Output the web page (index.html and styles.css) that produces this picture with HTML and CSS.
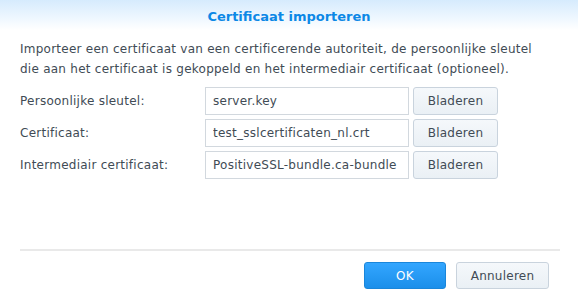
FILE: index.html
```html
<!DOCTYPE html>
<html lang="nl">

<head>
    <meta charset="UTF-8">
    <title>Certificaat importeren</title>
    <link rel="stylesheet" href="styles.css">
</head>

<body>
    <div class="dialog">
        <div class="dialog-header">Certificaat importeren</div>

        <div class="dialog-body">
            <p class="intro">Importeer een certificaat van een certificerende autoriteit, de persoonlijke sleutel die aan het certificaat is gekoppeld en het intermediair certificaat (optioneel).</p>

            <div class="form-row">
                <label class="field-label">Persoonlijke sleutel:</label>
                <input type="text" class="file-input" value="server.key" readonly>
                <button class="browse-button">Bladeren</button>
            </div>
            <div class="form-row">
                <label class="field-label">Certificaat:</label>
                <input type="text" class="file-input" value="test_sslcertificaten_nl.crt" readonly>
                <button class="browse-button">Bladeren</button>
            </div>
            <div class="form-row">
                <label class="field-label">Intermediair certificaat:</label>
                <input type="text" class="file-input" value="PositiveSSL-bundle.ca-bundle" readonly>
                <button class="browse-button">Bladeren</button>
            </div>
        </div>

        <div class="dialog-footer">
            <button class="ok-button">OK</button>
            <button class="cancel-button">Annuleren</button>
        </div>
    </div>
</body>

</html>
```

FILE: styles.css
```css
body {
    margin: 0;
    background-color: #ffffff;
    font-family: 'DejaVu Sans', Verdana, sans-serif;
    font-size: 12px;
    letter-spacing: 0.25px;
    color: #414b55;
}

.dialog {
    width: 578px;
    height: 295px;
    display: flex;
    flex-direction: column;
}

.dialog-header {
    height: 34px;
    line-height: 34px;
    text-align: center;
    font-weight: bold;
    font-size: 13px;
    letter-spacing: 0;
    color: #0c88e6;
    background: linear-gradient(to bottom, #d6ebfd 0px, #eef7ff 18px, #ffffff 30px);
}

.dialog-body {
    flex: 1;
    padding: 5px 28px 0 20px;
}

.intro {
    margin: 0 0 8px 0;
    line-height: 20px;
}

.form-row {
    display: flex;
    align-items: center;
    height: 28px;
    margin-bottom: 4px;
}

.field-label {
    width: 185px;
}

.file-input {
    width: 204px;
    height: 28px;
    box-sizing: border-box;
    border: 1px solid #d2d8de;
    padding: 0 7px;
    font-family: inherit;
    font-size: 12px;
    letter-spacing: inherit;
    color: #414b55;
    outline: none;
}

.browse-button {
    margin-left: 4px;
    width: 85px;
    height: 28px;
    border: 1px solid #c9d3dd;
    border-radius: 3px;
    background: linear-gradient(to bottom, #f5f8fb, #eaf0f5);
    font-family: inherit;
    font-size: 12px;
    letter-spacing: inherit;
    color: #414b55;
}

.dialog-footer {
    margin: 0 18px 0 20px;
    border-top: 2px solid #e9e9e9;
    height: 46px;
    box-sizing: border-box;
    display: flex;
    justify-content: flex-end;
    align-items: flex-start;
    padding-top: 11px;
    padding-right: 11px;
    gap: 10px;
}

.ok-button {
    width: 82px;
    height: 27px;
    border: 1px solid #1a86da;
    border-radius: 3px;
    background: linear-gradient(to bottom, #33a6ff, #1b8fea);
    color: #ffffff;
    font-family: inherit;
    font-size: 12px;
    letter-spacing: inherit;
}

.cancel-button {
    width: 93px;
    height: 27px;
    border: 1px solid #c9d3dd;
    border-radius: 3px;
    background: linear-gradient(to bottom, #f5f8fb, #eaf0f5);
    color: #414b55;
    font-family: inherit;
    font-size: 12px;
    letter-spacing: inherit;
}
```
